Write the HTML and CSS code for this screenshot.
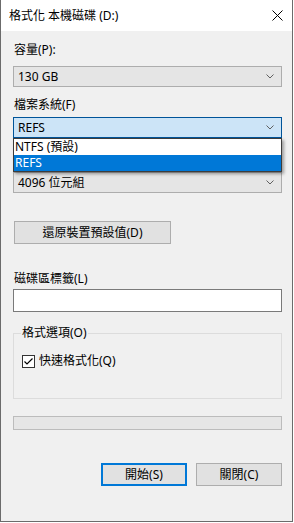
FILE: index.html
```html
<!DOCTYPE html>
<html lang="zh-Hant">
<head>
<meta charset="utf-8">
<title>格式化 本機磁碟 (D:)</title>
<link rel="stylesheet" href="styles.css">
</head>
<body>
<div class="window">
  <div class="titlebar">
    <span class="title">格式化 本機磁碟 (D:)</span>
    <svg class="close" width="11" height="11" viewBox="0 0 11 11"><path d="M0.5 0.5 L10.5 10.5 M10.5 0.5 L0.5 10.5" stroke="#000" stroke-width="1" fill="none"/></svg>
  </div>
  <div class="content">
    <div class="label l-cap">容量(P):</div>
    <div class="combo c-cap">
      <span>130 GB</span>
      <svg class="chev" width="8" height="5" viewBox="0 0 8 5"><path d="M0.5 0.5 L4 4 L7.5 0.5" stroke="#606060" fill="none"/></svg>
    </div>
    <div class="label l-fs">檔案系統(F)</div>
    <div class="combo-wrap">
      <div class="combo focused">
        <span>REFS</span>
        <svg class="chev" width="8" height="5" viewBox="0 0 8 5"><path d="M0.5 0.5 L4 4 L7.5 0.5" stroke="#606060" fill="none"/></svg>
      </div>
      <ul class="dropdown">
        <li>NTFS (預設)</li>
        <li class="selected">REFS</li>
      </ul>
    </div>
    <div class="combo c-unit">
      <span>4096 位元組</span>
      <svg class="chev" width="8" height="5" viewBox="0 0 8 5"><path d="M0.5 0.5 L4 4 L7.5 0.5" stroke="#606060" fill="none"/></svg>
    </div>
    <button class="btn restore">還原裝置預設值(D)</button>
    <div class="label l-vol">磁碟區標籤(L)</div>
    <div class="textbox"></div>
    <fieldset class="group">
      <legend>格式選項(O)</legend>
      <label class="check">
        <span class="box"><svg width="11" height="11" viewBox="0 0 11 11"><path d="M1.5 5.5 L4 8 L9.5 2.5" stroke="#000" stroke-width="1.2" fill="none"/></svg></span>
        <span>快速格式化(Q)</span>
      </label>
    </fieldset>
    <div class="progress"></div>
    <div class="actions">
      <button class="btn action default">開始(S)</button>
      <button class="btn action">關閉(C)</button>
    </div>
  </div>
</div>
</body>
</html>
```
FILE: styles.css
```css
html, body {
  margin: 0;
  padding: 0;
  background: #ffffff;
}
body {
  font-family: "Noto Sans", "Noto Sans CJK TC", sans-serif;
  font-size: 12px;
  color: #000;
}
.window {
  width: 291px;
  height: 521px;
  border-left: 1px solid #6b6b6b;
  border-right: 1px solid #6b6b6b;
  border-bottom: 1px solid #6b6b6b;
  background: #f0f0f0;
  display: flex;
  flex-direction: column;
}
.titlebar {
  height: 31px;
  background: #ffffff;
  display: flex;
  align-items: center;
  justify-content: space-between;
  padding: 0 9px 0 8px;
  flex-shrink: 0;
}
.title {
  line-height: 16px;
}
.close {
  display: block;
  margin-top: 0;
}
.content {
  padding: 0 10px 0 12px;
  display: flex;
  flex-direction: column;
}
.label {
  line-height: 16px;
  height: 16px;
  padding-left: 1px;
}
.l-cap { margin-top: 11px; }
.l-fs { margin-top: 10px; }
.l-vol { margin-top: 27px; }
.combo {
  box-sizing: border-box;
  height: 21px;
  width: 269px;
  border: 1px solid #adadad;
  background: #e5e5e5;
  display: flex;
  align-items: center;
  justify-content: space-between;
  padding: 0 7px 0 4px;
  line-height: 16px;
}
.c-cap { margin-top: 8px; }
.combo-wrap {
  position: relative;
  margin-top: 4px;
}
.combo.focused {
  background: #cce4f7;
  border-color: #005499;
}
.dropdown {
  position: absolute;
  left: 0;
  top: 21px;
  width: 269px;
  box-sizing: border-box;
  margin: 0;
  padding: 0;
  list-style: none;
  background: #ffffff;
  border: 1px solid #3c3c3c;
  box-shadow: 2px 2px 3px rgba(0, 0, 0, 0.35);
  z-index: 2;
}
.dropdown li {
  height: 16px;
  line-height: 16px;
  padding-left: 1px;
}
.dropdown li.selected {
  background: #0078d7;
  color: #ffffff;
}
.c-unit { margin-top: 34px; }
.btn {
  font-family: inherit;
  font-size: 12px;
  color: #000;
  background: #e1e1e1;
  border: 1px solid #adadad;
  box-sizing: border-box;
  height: 23px;
  padding: 0;
  line-height: 16px;
}
.restore {
  margin-top: 28px;
  width: 157px;
  margin-left: 1px;
}
.textbox {
  box-sizing: border-box;
  margin-top: 2px;
  width: 269px;
  height: 23px;
  background: #ffffff;
  border: 1px solid #7a7a7a;
}
.group {
  margin: 13px 0 0 0;
  padding: 0 0 29px 8px;
  width: 269px;
  box-sizing: border-box;
  border: 1px solid #dcdcdc;
  min-width: 0;
}
.group legend {
  padding: 0 1px;
  margin-left: -1px;
  line-height: 16px;
}
.check {
  margin-top: 12px;
  display: flex;
  align-items: center;
  gap: 4px;
  line-height: 16px;
}
.box {
  width: 11px;
  height: 11px;
  border: 1px solid #333333;
  background: #ffffff;
  display: block;
}
.box svg { display: block; }
.progress {
  margin-top: 17px;
  width: 269px;
  height: 14px;
  box-sizing: border-box;
  background: #e6e6e6;
  border: 1px solid #bcbcbc;
}
.actions {
  margin-top: 33px;
  width: 269px;
  display: flex;
  justify-content: flex-end;
  gap: 9px;
}
.action {
  width: 86px;
}
.action.default {
  border: 2px solid #0078d7;
}
```
